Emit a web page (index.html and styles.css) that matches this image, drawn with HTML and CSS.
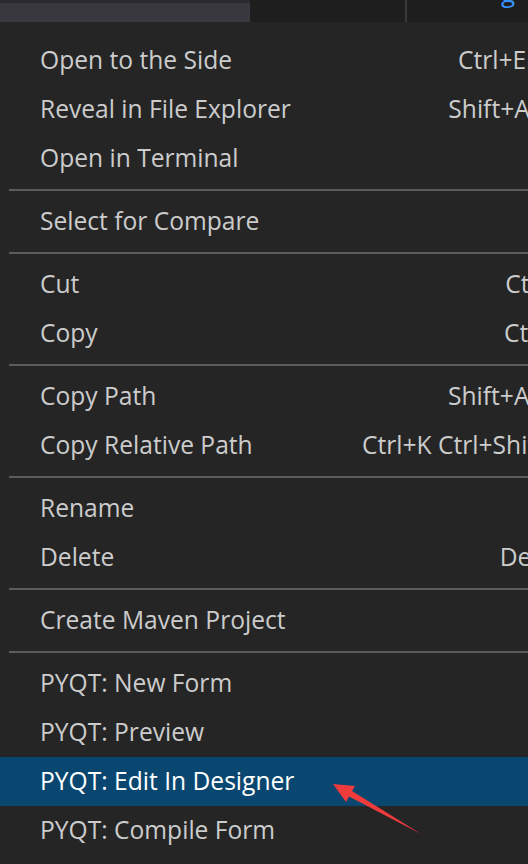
FILE: index.html
```html
<!DOCTYPE html>
<html>
<head>
<meta charset="utf-8">
<link rel="stylesheet" href="styles.css">
</head>
<body>
<div class="topbar">
  <div class="tab-active"></div>
  <div class="tab-plain"></div>
  <div class="tab-divider"></div>
  <div class="tab-right"><span class="tab-glyph">g</span></div>
</div>
<div class="menu">
  <div class="item"><span class="label">Open to the Side</span><span class="key">Ctrl+Enter</span></div>
  <div class="item"><span class="label">Reveal in File Explorer</span><span class="key">Shift+Alt+R</span></div>
  <div class="item"><span class="label">Open in Terminal</span><span class="key"></span></div>
  <div class="sep"></div>
  <div class="item"><span class="label">Select for Compare</span><span class="key"></span></div>
  <div class="sep"></div>
  <div class="item"><span class="label">Cut</span><span class="key">Ctrl+X</span></div>
  <div class="item"><span class="label">Copy</span><span class="key">Ctrl+C</span></div>
  <div class="sep"></div>
  <div class="item"><span class="label">Copy Path</span><span class="key">Shift+Alt+C</span></div>
  <div class="item"><span class="label">Copy Relative Path</span><span class="key">Ctrl+K Ctrl+Shift+C</span></div>
  <div class="sep"></div>
  <div class="item"><span class="label">Rename</span><span class="key">F2</span></div>
  <div class="item"><span class="label">Delete</span><span class="key">Delete</span></div>
  <div class="sep"></div>
  <div class="item"><span class="label">Create Maven Project</span><span class="key"></span></div>
  <div class="sep"></div>
  <div class="item"><span class="label">PYQT: New Form</span><span class="key"></span></div>
  <div class="item"><span class="label">PYQT: Preview</span><span class="key"></span></div>
  <div class="item active"><span class="label">PYQT: Edit In Designer</span><span class="key"></span></div>
  <div class="item"><span class="label">PYQT: Compile Form</span><span class="key"></span></div>
</div>
<svg class="arrow" width="528" height="864" viewBox="0 0 528 864">
  <polygon points="333,784 355,786 352,791 421,834 349,796.5 346,802" fill="#ef3b3b"/>
</svg>
</body>
</html>
```
FILE: styles.css
```css
html, body {
  margin: 0;
  padding: 0;
  width: 528px;
  height: 864px;
  overflow: hidden;
  background: #252526;
  font-family: "Open Sans", "Noto Sans", sans-serif;
}

.topbar {
  display: flex;
  height: 22px;
  background: #1e1e1e;
}

.tab-active {
  width: 250px;
  background: #38383e;
  border-top: 3px solid #2a2a2e;
}

.tab-plain {
  width: 155px;
  background: #1e1e1e;
}

.tab-divider {
  width: 2px;
  background: #3a3a3a;
}

.tab-right {
  flex: 1;
  display: flex;
  justify-content: flex-end;
  overflow: hidden;
  background: #1e1e1e;
  padding-right: 13px;
}

.tab-glyph {
  color: #3794ff;
  font-size: 26px;
  line-height: 24px;
  margin-top: -20px;
}

.menu {
  width: 620px;
  padding-top: 14px;
  background: #252526;
  color: #cccccc;
  font-size: 24.6px;
}

.item {
  box-sizing: border-box;
  height: 49px;
  display: flex;
  align-items: center;
  justify-content: space-between;
  padding: 0 46px 2px 40px;
}

.item.active {
  background: #094771;
  color: #ffffff;
}

.label, .key {
  white-space: nowrap;
}

.sep {
  height: 2px;
  margin: 6px 0 6px 9px;
  background: #5c5c5c;
}

.arrow {
  position: absolute;
  left: 0;
  top: 0;
  pointer-events: none;
}
```
